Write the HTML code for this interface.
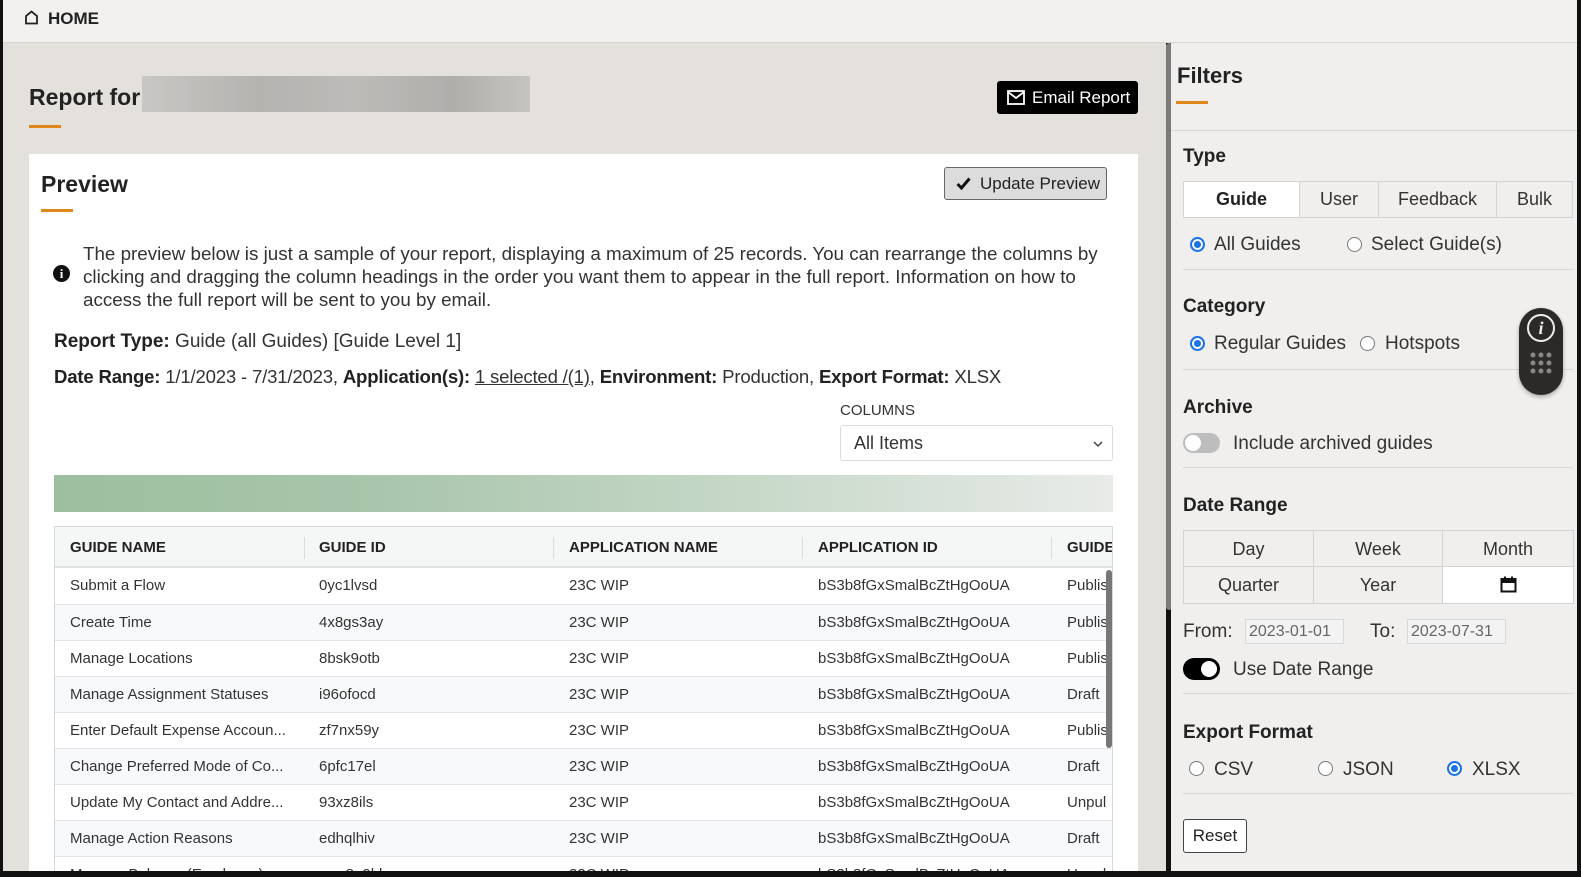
<!DOCTYPE html>
<html><head><meta charset="utf-8"><style>
*{box-sizing:border-box;margin:0;padding:0}
body{width:1581px;height:877px;overflow:hidden;background:#111;font-family:"Liberation Sans",sans-serif;color:#222;position:relative}
.a{position:absolute}
.t{white-space:nowrap}
#top{left:3px;top:0;width:1574px;height:43px;background:#f1f0ee;border-bottom:1px solid #d8d6d2}
#main{left:3px;top:43px;width:1163px;height:828px;background:#e4e1dc}
#card{left:29px;top:154px;width:1109px;height:717px;background:#fff}
#filt{left:1171px;top:43px;height:828px;background:#f0efed;width:406px}
.h2{font-weight:bold;font-size:21px;color:#222}
.ul{height:3px;width:32px;background:#e0871c}
.div{height:1px;background:#d9d7d3;left:1183px;width:390px}
.lbl{font-size:19px;color:#333}
.radio{width:15px;height:15px;border-radius:50%;border:1px solid #777;background:#fff}
.radio.on{border:2px solid #1a73e8;box-shadow:inset 0 0 0 2px #fff;background:#1a73e8}
.row{left:55px;width:1057px;height:36px;border-top:1px solid #e2e4e8;font-size:15px;color:#333}
.row span{position:absolute;top:9px;white-space:nowrap}
</style></head><body>
<div id="top" class="a">
 <svg class="a" style="left:21px;top:10px" width="15" height="15" viewBox="0 0 15 15"><path d="M2 13.5V6L7.5 1.5 13 6v7.5z" fill="none" stroke="#222" stroke-width="1.8"/></svg>
 <div class="a t" style="left:45px;top:9px;font-weight:bold;font-size:17px;color:#222">HOME</div>
</div>
<div id="main" class="a"></div>
<div class="a t h2" style="left:29px;top:84px;font-size:23px">Report for</div>
<div class="a" style="left:142px;top:76px;width:388px;height:36px;background:linear-gradient(90deg,#c9c7c4,#b5b3b0 30%,#bdbbb8 55%,#b0aeab 80%,#c6c4c1)"></div>
<div class="a ul" style="left:29px;top:125px"></div>
<div class="a" style="left:997px;top:81px;width:141px;height:33px;background:#000;border-radius:3px;color:#fff;font-size:17px">
 <svg class="a" style="left:10px;top:9px" width="18" height="15" viewBox="0 0 18 15"><rect x="1" y="1" width="16" height="13" fill="none" stroke="#fff" stroke-width="1.8"/><path d="M1 2l8 6 8-6" fill="none" stroke="#fff" stroke-width="1.8"/></svg>
 <span class="a t" style="left:35px;top:7px">Email Report</span></div>
<div id="card" class="a"></div>
<div class="a t h2" style="left:41px;top:171px;font-size:23px">Preview</div>
<div class="a ul" style="left:41px;top:209px"></div>
<div class="a" style="left:944px;top:167px;width:163px;height:33px;background:#dcdcdc;border:1px solid #666;border-radius:3px;font-size:17px;color:#222">
 <svg class="a" style="left:11px;top:9px" width="15" height="13" viewBox="0 0 15 13"><path d="M1.5 7l4 4 8-9.5" fill="none" stroke="#111" stroke-width="3"/></svg>
 <span class="a t" style="left:35px;top:6px">Update Preview</span></div>
<div class="a" style="left:53px;top:265px;width:17px;height:17px;border-radius:50%;background:#111;color:#fff;font-weight:bold;font-size:13px;text-align:center;line-height:17px;font-family:'Liberation Serif',serif">i</div>
<div class="a" style="left:83px;top:242px;width:1040px;font-size:18.8px;line-height:23px;color:#333">The preview below is just a sample of your report, displaying a maximum of 25 records. You can rearrange the columns by clicking and dragging the column headings in the order you want them to appear in the full report. Information on how to access the full report will be sent to you by email.</div>
<div class="a t" style="left:54px;top:331px;font-size:19px;color:#333"><b style="color:#222">Report Type:</b> Guide (all Guides) [Guide Level 1]</div>
<div class="a t" style="left:54px;top:366px;font-size:18.6px;letter-spacing:-0.2px;color:#333"><b style="color:#222">Date Range:</b> 1/1/2023 - 7/31/2023, <b style="color:#222">Application(s):</b> <u>1 selected /(1)</u>, <b style="color:#222">Environment:</b> Production, <b style="color:#222">Export Format:</b> XLSX</div>
<div class="a t" style="left:840px;top:402px;font-size:15px;color:#333">COLUMNS</div>
<div class="a" style="left:840px;top:425px;width:273px;height:36px;border:1px solid #dcdcdc;border-radius:3px;background:#fff">
 <span class="a t" style="left:13px;top:7px;font-size:18px;color:#333">All Items</span>
 <svg class="a" style="left:252px;top:15px" width="10" height="7" viewBox="0 0 10 7"><path d="M1 1l4 4 4-4" fill="none" stroke="#444" stroke-width="1.5"/></svg></div>
<div class="a" style="left:54px;top:475px;width:1059px;height:37px;background:linear-gradient(90deg,#9dbf9f,#a8c5ab 30%,#c6d8c8 65%,#e8ebe8)"></div>
<div class="a" style="left:54px;top:526px;width:1059px;height:345px;border:1px solid #d5d8dc;border-bottom:none;background:#fff;overflow:hidden">
 <div class="a" style="left:0;top:0;width:1059px;height:41px;background:#f5f6f6;border-bottom:2px solid #e0e2e5;font-weight:bold;font-size:15px;color:#222">
  <span class="a t" style="left:15px;top:12px">GUIDE NAME</span>
  <span class="a t" style="left:264px;top:12px">GUIDE ID</span>
  <span class="a t" style="left:514px;top:12px">APPLICATION NAME</span>
  <span class="a t" style="left:763px;top:12px">APPLICATION ID</span>
  <span class="a t" style="left:1012px;top:12px">GUIDE</span>
  <div class="a" style="left:249px;top:10px;width:1px;height:22px;background:#ddd"></div>
  <div class="a" style="left:498px;top:10px;width:1px;height:22px;background:#ddd"></div>
  <div class="a" style="left:747px;top:10px;width:1px;height:22px;background:#ddd"></div>
  <div class="a" style="left:996px;top:10px;width:1px;height:22px;background:#ddd"></div>
 </div>
</div>
<div class="a row" style="top:568px;border-top:none;background:#fff"><span style="left:15px">Submit a Flow</span><span style="left:264px">0yc1lvsd</span><span style="left:514px">23C WIP</span><span style="left:763px">bS3b8fGxSmalBcZtHgOoUA</span><span style="left:1012px">Publis</span></div>
<div class="a row" style="top:604px;background:#f8f9fb"><span style="left:15px">Create Time</span><span style="left:264px">4x8gs3ay</span><span style="left:514px">23C WIP</span><span style="left:763px">bS3b8fGxSmalBcZtHgOoUA</span><span style="left:1012px">Publis</span></div>
<div class="a row" style="top:640px;background:#fff"><span style="left:15px">Manage Locations</span><span style="left:264px">8bsk9otb</span><span style="left:514px">23C WIP</span><span style="left:763px">bS3b8fGxSmalBcZtHgOoUA</span><span style="left:1012px">Publis</span></div>
<div class="a row" style="top:676px;background:#f8f9fb"><span style="left:15px">Manage Assignment Statuses</span><span style="left:264px">i96ofocd</span><span style="left:514px">23C WIP</span><span style="left:763px">bS3b8fGxSmalBcZtHgOoUA</span><span style="left:1012px">Draft</span></div>
<div class="a row" style="top:712px;background:#fff"><span style="left:15px">Enter Default Expense Accoun...</span><span style="left:264px">zf7nx59y</span><span style="left:514px">23C WIP</span><span style="left:763px">bS3b8fGxSmalBcZtHgOoUA</span><span style="left:1012px">Publis</span></div>
<div class="a row" style="top:748px;background:#f8f9fb"><span style="left:15px">Change Preferred Mode of Co...</span><span style="left:264px">6pfc17el</span><span style="left:514px">23C WIP</span><span style="left:763px">bS3b8fGxSmalBcZtHgOoUA</span><span style="left:1012px">Draft</span></div>
<div class="a row" style="top:784px;background:#fff"><span style="left:15px">Update My Contact and Addre...</span><span style="left:264px">93xz8ils</span><span style="left:514px">23C WIP</span><span style="left:763px">bS3b8fGxSmalBcZtHgOoUA</span><span style="left:1012px">Unpul</span></div>
<div class="a row" style="top:820px;background:#f8f9fb"><span style="left:15px">Manage Action Reasons</span><span style="left:264px">edhqlhiv</span><span style="left:514px">23C WIP</span><span style="left:763px">bS3b8fGxSmalBcZtHgOoUA</span><span style="left:1012px">Draft</span></div>
<div class="a row" style="top:856px;background:#fff;height:15px;overflow:hidden"><span style="left:15px">Manage Balance (Employee)</span><span style="left:264px">ows8u9hk</span><span style="left:514px">23C WIP</span><span style="left:763px">bS3b8fGxSmalBcZtHgOoUA</span><span style="left:1012px">Unpul</span></div>
<div class="a" style="left:1106px;top:570px;width:6px;height:178px;background:#777;border-radius:3px"></div>
<div class="a" style="left:1166px;top:43px;width:6px;height:567px;background:#7a7a7a;border-radius:3px"></div>

<div id="filt" class="a"></div>
<div class="a t h2" style="left:1177px;top:63px;font-size:22px">Filters</div>
<div class="a ul" style="left:1176px;top:101px"></div>
<div class="a div" style="left:1171px;width:406px;top:130px"></div>
<div class="a t h2" style="left:1183px;top:146px;font-size:19px">Type</div>
<div class="a" style="left:1183px;top:181px;width:390px;height:37px;border:1px solid #d3d3d3;background:#f0efed;font-size:18px;color:#333">
 <div class="a" style="left:0;top:0;width:116px;height:35px;background:#fff;border-right:1px solid #d3d3d3;text-align:center;line-height:35px;font-weight:bold;color:#222">Guide</div>
 <div class="a" style="left:116px;top:0;width:79px;height:35px;border-right:1px solid #d3d3d3;text-align:center;line-height:35px">User</div>
 <div class="a" style="left:195px;top:0;width:118px;height:35px;border-right:1px solid #d3d3d3;text-align:center;line-height:35px">Feedback</div>
 <div class="a" style="left:313px;top:0;width:75px;height:35px;text-align:center;line-height:35px">Bulk</div>
</div>
<div class="a radio on" style="left:1190px;top:237px"></div><div class="a t lbl" style="left:1214px;top:234px">All Guides</div>
<div class="a radio" style="left:1347px;top:237px"></div><div class="a t lbl" style="left:1371px;top:234px">Select Guide(s)</div>
<div class="a div" style="top:269px"></div>
<div class="a t h2" style="left:1183px;top:296px;font-size:19px">Category</div>
<div class="a radio on" style="left:1190px;top:336px"></div><div class="a t lbl" style="left:1214px;top:333px">Regular Guides</div>
<div class="a radio" style="left:1360px;top:336px"></div><div class="a t lbl" style="left:1385px;top:333px">Hotspots</div>
<div class="a div" style="top:369px"></div>
<div class="a t h2" style="left:1183px;top:397px;font-size:19px">Archive</div>
<div class="a" style="left:1183px;top:433px;width:37px;height:20px;border-radius:10px;background:#bdbdbd"><div class="a" style="left:2px;top:2px;width:16px;height:16px;border-radius:50%;background:#fff"></div></div>
<div class="a t lbl" style="left:1233px;top:433px">Include archived guides</div>
<div class="a div" style="top:467px"></div>
<div class="a t h2" style="left:1183px;top:495px;font-size:19px">Date Range</div>
<div class="a" style="left:1183px;top:530px;width:391px;height:74px;border:1px solid #d3d3d3;font-size:18px;color:#333;background:#f0efed">
 <div class="a" style="left:0;top:0;width:130px;height:36px;border-right:1px solid #d3d3d3;border-bottom:1px solid #d3d3d3;text-align:center;line-height:36px">Day</div>
 <div class="a" style="left:130px;top:0;width:129px;height:36px;border-right:1px solid #d3d3d3;border-bottom:1px solid #d3d3d3;text-align:center;line-height:36px">Week</div>
 <div class="a" style="left:259px;top:0;width:130px;height:36px;border-bottom:1px solid #d3d3d3;text-align:center;line-height:36px">Month</div>
 <div class="a" style="left:0;top:36px;width:130px;height:36px;border-right:1px solid #d3d3d3;text-align:center;line-height:36px">Quarter</div>
 <div class="a" style="left:130px;top:36px;width:129px;height:36px;border-right:1px solid #d3d3d3;text-align:center;line-height:36px">Year</div>
 <div class="a" style="left:259px;top:36px;width:130px;height:36px;background:#fff">
  <svg class="a" style="left:57px;top:9px" width="17" height="17" viewBox="0 0 17 17"><rect x="1.5" y="3" width="14" height="12.5" fill="none" stroke="#111" stroke-width="2"/><rect x="1.5" y="3" width="14" height="4" fill="#111"/><rect x="4" y="0.5" width="2" height="4" fill="#111"/><rect x="11" y="0.5" width="2" height="4" fill="#111"/></svg>
 </div>
</div>
<div class="a t lbl" style="left:1183px;top:621px">From:</div>
<div class="a" style="left:1245px;top:619px;width:99px;height:25px;border:1px solid #d8d8d8;background:#f3f3f3;font-size:16px;color:#666;padding:3px 3px"><span class="t">2023-01-01</span></div>
<div class="a t lbl" style="left:1370px;top:621px">To:</div>
<div class="a" style="left:1407px;top:619px;width:99px;height:25px;border:1px solid #d8d8d8;background:#f3f3f3;font-size:16px;color:#666;padding:3px 3px"><span class="t">2023-07-31</span></div>
<div class="a" style="left:1183px;top:658px;width:37px;height:22px;border-radius:11px;background:#000"><div class="a" style="left:18px;top:3px;width:16px;height:16px;border-radius:50%;background:#fff"></div></div>
<div class="a t lbl" style="left:1233px;top:659px">Use Date Range</div>
<div class="a div" style="top:693px"></div>
<div class="a t h2" style="left:1183px;top:722px;font-size:19px">Export Format</div>
<div class="a radio" style="left:1189px;top:761px"></div><div class="a t lbl" style="left:1214px;top:759px">CSV</div>
<div class="a radio" style="left:1318px;top:761px"></div><div class="a t lbl" style="left:1343px;top:759px">JSON</div>
<div class="a radio on" style="left:1447px;top:761px"></div><div class="a t lbl" style="left:1472px;top:759px">XLSX</div>
<div class="a div" style="top:793px"></div>
<div class="a" style="left:1183px;top:819px;width:64px;height:34px;border:1px solid #444;border-radius:3px;background:#fff;font-size:17px;text-align:center;line-height:31px;color:#222">Reset</div>
<div class="a" style="left:1519px;top:308px;width:44px;height:87px;border-radius:22px;background:#2b2a28;box-shadow:0 2px 4px rgba(0,0,0,.3)">
 <div class="a" style="left:8px;top:6px;width:28px;height:28px;border-radius:50%;border:2px solid #eee;color:#eee;text-align:center;line-height:24px;font-family:'Liberation Serif',serif;font-style:italic;font-weight:bold;font-size:18px">i</div>
 <svg class="a" style="left:11px;top:44px" width="22" height="22" viewBox="0 0 22 22" fill="#888"><circle cx="3" cy="3" r="2.5"/><circle cx="11" cy="3" r="2.5"/><circle cx="19" cy="3" r="2.5"/><circle cx="3" cy="11" r="2.5"/><circle cx="11" cy="11" r="2.5"/><circle cx="19" cy="11" r="2.5"/><circle cx="3" cy="19" r="2.5"/><circle cx="11" cy="19" r="2.5"/><circle cx="19" cy="19" r="2.5"/></svg>
</div>
</body></html>
